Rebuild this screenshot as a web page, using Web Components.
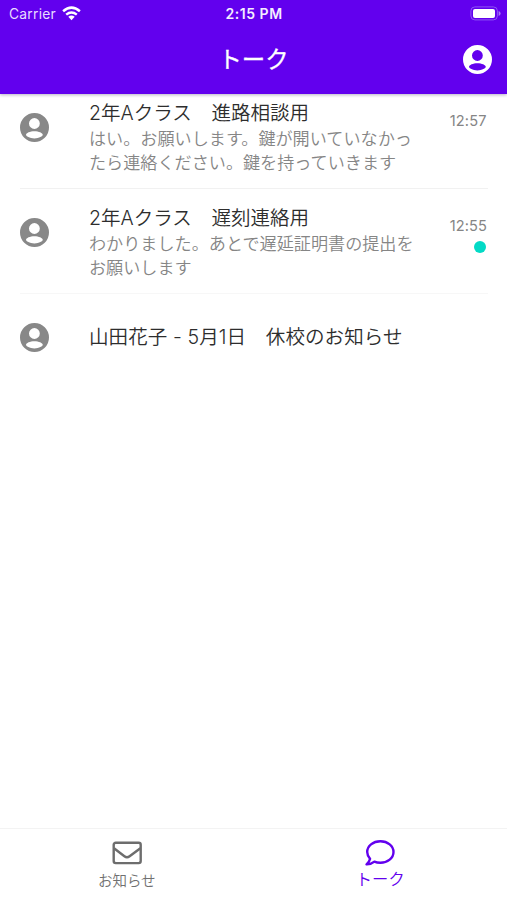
<!DOCTYPE html>
<html lang="ja">
<head>
<meta charset="utf-8">
<title>トーク</title>
<style>
html,body{margin:0;height:100%;background:#fff}
body{font-family:Inter,"Noto Sans CJK JP",sans-serif}
</style>
</head>
<body>
<talk-app></talk-app>
<script>
const make = (name, html) => customElements.define(name, class extends HTMLElement {
  constructor() {
    super();
    const t = document.createElement('template');
    t.innerHTML = html;
    this.attachShadow({mode: 'open'}).append(t.content.cloneNode(true));
  }
});

make('user-icon', `<style>:host{display:block;width:29px;height:29px;color:#888}svg{display:block;width:100%;height:100%}</style>
<svg viewBox="0 0 29 29"><path fill="currentColor" fill-rule="evenodd" d="M14.5 0a14.5 14.5 0 1 0 0 29a14.5 14.5 0 1 0 0-29ZM14.4 5.1a5.4 5.4 0 1 1 0 10.8a5.4 5.4 0 1 1 0-10.8ZM14.4 18.2c4.4 0 8.4 1.7 8.4 3.6c0 1.5-3.6 3.6-8.4 3.6s-8.4-2.1-8.4-3.6c0-1.9 4-3.6 8.4-3.6Z"/></svg>`);

make('status-bar', `<style>
:host{display:grid;grid-template-columns:1fr auto 1fr;align-items:center;height:27px;padding:0 6px 0 9px;font-size:13.8px;color:#fff}
.l{display:flex;align-items:center;gap:6px;color:#e8dcff;letter-spacing:.25px}.t{font-weight:600;font-size:14px;letter-spacing:.55px;color:#f4edff;margin-right:2px}
.b{justify-self:end}svg{display:block;margin-top:-1px}
</style><div class="l"><span>Carrier</span><svg width="19" height="15" viewBox="0 0 19 15"><g fill="none" stroke="#fff" stroke-width="2.5"><path d="M1.1 5.2Q9.5-1.9 17.9 5.2M4.2 8.6Q9.5 4.3 14.8 8.6"/></g><path fill="#fff" d="M6.3 10.8Q9.5 8.2 12.7 10.8L9.5 14.2Z"/></svg></div>
<span class="t">2:15 PM</span>
<svg class="b" width="31" height="15" viewBox="0 0 31 15"><rect x=".9" y=".9" width="26.5" height="13" rx="4" fill="none" stroke="#8f55f4"/><rect x="3" y="3" width="22" height="9" rx="2" fill="#fff"/><path d="M28.6 5v5q2-.8 2-2.5t-2-2.5" fill="#a77af6"/></svg>`);

make('app-header', `<style>
:host{display:block;height:94px;background:#6200ee;position:relative;z-index:1;box-shadow:0 1px 3px rgba(35,15,80,.32);color:#fff}
.bar{display:grid;grid-template-columns:1fr auto 1fr;align-items:center;height:65px;padding:0 15px}
.title{grid-column:2;font-size:23.4px;font-weight:400;-webkit-text-stroke:.3px #fff;line-height:30px;color:#fff}
user-icon{justify-self:end;color:#fff}
</style><status-bar></status-bar><div class="bar"><span class="title"><slot></slot></span><user-icon></user-icon></div>`);

make('talk-row', `<style>
:host{display:grid;grid-template-columns:69px 1fr 75px;height:104px;margin:0 19px 0 20px;border-bottom:1px solid #f1f1f1}
:host([unread]){border-color:#f7f7f7}
:host([last]){border-color:transparent}
user-icon{margin-top:29.4px}
.main{padding-top:17px;white-space:nowrap}
:host([last]) .main{padding-top:31px}
.title{font-size:19.55px;font-weight:350;line-height:25px;color:#2d2d2d}
:host([last]) .title{letter-spacing:.08px}
.body{font-size:17.13px;font-weight:350;line-height:24.4px;padding-top:.6px;color:#858585}
.side{display:flex;flex-direction:column;align-items:flex-end;padding:28px 1.5px 0 0;gap:6px;color:#858585;font-size:14.6px;line-height:18px;letter-spacing:.1px}
.dot{display:none;width:12px;height:12px;border-radius:50%;background:#03dac6;margin-right:1px}
:host([unread]) .dot{display:block}
</style><user-icon></user-icon><div class="main"><div class="title"><slot name="title"></slot></div><div class="body"><slot></slot></div></div>
<div class="side"><slot name="time"></slot><i class="dot"></i></div>`);

make('tab-item', `<style>
:host{display:flex;flex-direction:column;align-items:center;flex:1;padding-top:8.5px;color:#707070;font-size:14.5px;font-weight:350}
:host([active]){color:#6200ee;font-size:16.3px}
span{line-height:20px;margin-top:3.5px}:host([active]) span{margin-top:1.4px}
</style><slot name="icon"></slot><span><slot></slot></span>`);

make('tab-bar', `<style>:host{display:flex;height:71px;border-top:1px solid #f3f3f3;background:#fff}</style><slot></slot>`);

make('talk-app', `<style>
:host{display:flex;flex-direction:column;height:100vh;overflow:hidden}
.list{flex:1;margin-top:-10px;overflow:hidden}
svg{display:block}
</style>
<app-header>トーク</app-header>
<div class="list">
<talk-row><span slot="title">2年Aクラス　進路相談用</span>はい。お願いします。鍵が開いていなかっ<br>たら連絡ください。鍵を持っていきます<span slot="time">12:57</span></talk-row>
<talk-row unread><span slot="title">2年Aクラス　遅刻連絡用</span>わかりました。あとで遅延証明書の提出を<br>お願いします<span slot="time">12:55</span></talk-row>
<talk-row last><span slot="title">山田花子 - 5月1日　休校のお知らせ</span></talk-row>
</div>
<tab-bar>
<tab-item><svg slot="icon" width="30" height="30" viewBox="0 0 30 30" fill="none" stroke="#6d6d6d" stroke-width="2.4" stroke-linejoin="round"><rect x="1.7" y="4.7" width="27" height="20.4" rx="2"/><path d="M2 10.2L12.4 18.3Q15 20.3 17.6 18.3L28.4 10.2"/></svg>お知らせ</tab-item>
<tab-item active><svg slot="icon" width="30" height="30" viewBox="0 0 30 30" fill="none" stroke="#6200ee" stroke-width="2.4" stroke-linejoin="round"><path d="M15.4 3.3C8 3.3 2.2 8 2.2 14C2.2 16.6 3.3 18.9 5.1 20.8C4.7 22.8 3.4 24.7 1.6 26.4C4.8 26.5 7.6 25.2 9.4 23.7C11.2 24.5 13.2 24.8 15.4 24.8C22.7 24.8 28.5 20 28.5 14C28.5 8 22.7 3.3 15.4 3.3Z"/></svg>トーク</tab-item>
</tab-bar>`);
</script>
</body>
</html>
